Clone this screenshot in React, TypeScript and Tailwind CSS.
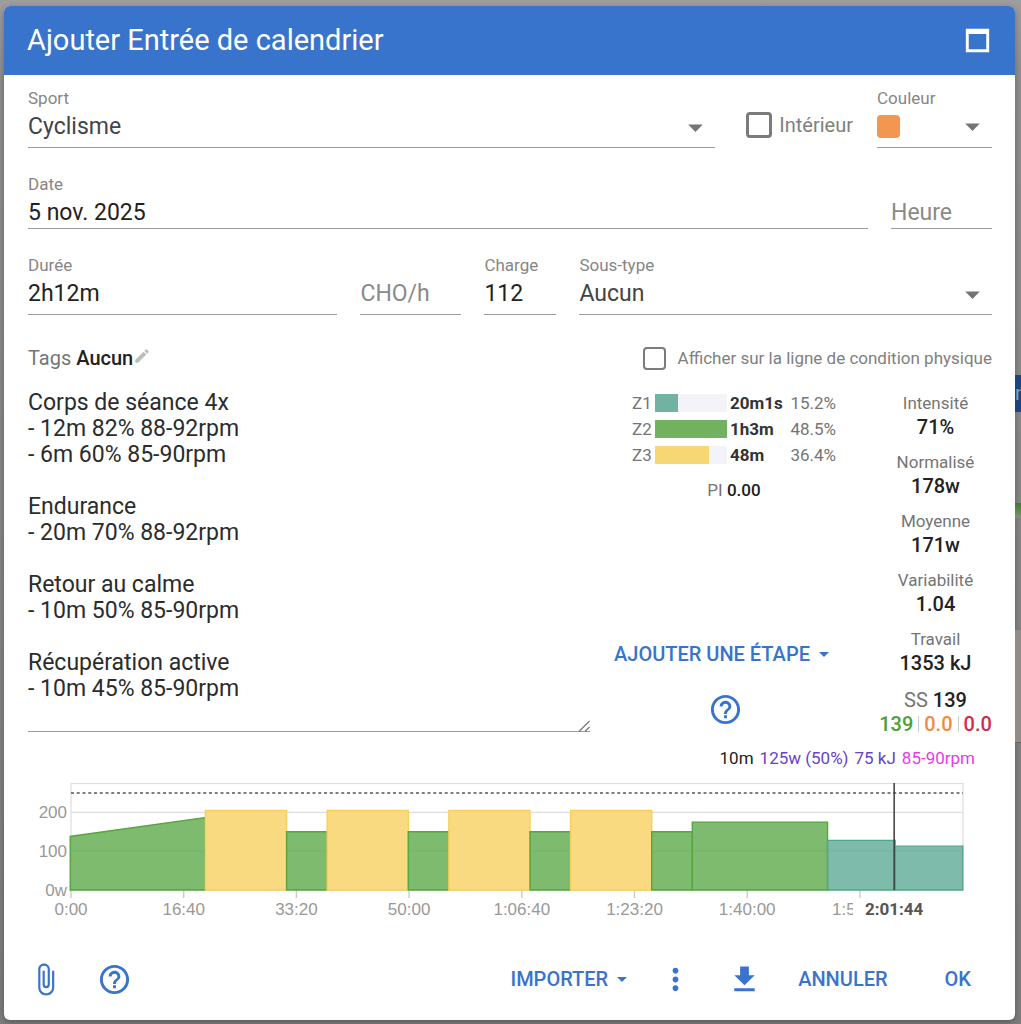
import { useState } from "react";
import type { ReactNode } from "react";
import {
  MdArrowDropDown,
  MdAttachFile,
  MdEdit,
  MdFileDownload,
  MdHelpOutline,
  MdMoreVert,
} from "react-icons/md";

const zones = [
  { name: "Z1", time: "20m1s", pct: "15.2%", fill: 32, color: "bg-[#72b2a1]" },
  { name: "Z2", time: "1h3m", pct: "48.5%", fill: 100, color: "bg-[#71b160]" },
  { name: "Z3", time: "48m", pct: "36.4%", fill: 75, color: "bg-[#f7d774]" },
];

const stats = [
  { label: "Intensité", value: "71%" },
  { label: "Normalisé", value: "178w" },
  { label: "Moyenne", value: "171w" },
  { label: "Variabilité", value: "1.04" },
  { label: "Travail", value: "1353 kJ" },
];

const workout = `Corps de séance 4x
- 12m 82% 88-92rpm
- 6m 60% 85-90rpm

Endurance
- 20m 70% 88-92rpm

Retour au calme
- 10m 50% 85-90rpm

Récupération active
- 10m 45% 85-90rpm`;

const zoneFill = {
  z1: { fill: "#5faa96", stroke: "#52a68c", opacity: 0.8 },
  z2: { fill: "#5faa4a", stroke: "#56a641", opacity: 0.8 },
  z3: { fill: "#fada80", stroke: "#f8cf5c", opacity: 1 },
};

type Step = { secs: number; from: number; to: number; zone: keyof typeof zoneFill };

const interval: Step[] = [
  { secs: 720, from: 205, to: 205, zone: "z3" },
  { secs: 360, from: 150, to: 150, zone: "z2" },
];

const steps: Step[] = [
  { secs: 1200, from: 138, to: 187, zone: "z2" },
  ...interval,
  ...interval,
  ...interval,
  ...interval,
  { secs: 1200, from: 175, to: 175, zone: "z2" },
  { secs: 600, from: 128, to: 128, zone: "z1" },
  { secs: 600, from: 113, to: 113, zone: "z1" },
];

const ticks = ["0:00", "16:40", "33:20", "50:00", "1:06:40", "1:23:20", "1:40:00"];

function Field({ label, id, className, children }: { label?: string; id: string; className: string; children: ReactNode }) {
  return (
    <div className={`flex min-w-0 flex-col justify-end gap-1 ${className}`}>
      {label && (
        <label htmlFor={id} className="text-[17px] leading-5 text-[#868686]">
          {label}
        </label>
      )}
      {children}
    </div>
  );
}

const inputClass =
  "w-full min-w-0 border-b border-[#9b9b9b] bg-transparent text-[23px] leading-7 text-[#222] outline-none placeholder:text-[#8a8a8a]";

function Select({ id, value }: { id: string; value: string }) {
  return (
    <div className="grid items-center border-b border-[#9b9b9b] pt-px pb-1.5">
      <select
        id={id}
        className="col-start-1 row-start-1 h-7 w-full appearance-none bg-transparent text-[23px] leading-7 text-[#444] outline-none"
      >
        <option>{value}</option>
      </select>
      <MdArrowDropDown className="pointer-events-none col-start-1 row-start-1 mr-0.5 size-[35px] -my-1 justify-self-end text-[#757575]" />
    </div>
  );
}

function PowerChart() {
  const x = (secs: number) => 43 + secs * 0.1127;
  const y = (watts: number) => 114 - watts * 0.388;

  let start = 0;
  const shapes = steps.map((s, i) => {
    const a = x(start) - 0.8;
    start += s.secs;
    const b = x(start) - 0.8;
    const c = zoneFill[s.zone];
    return (
      <path
        key={i}
        d={`M${a} ${y(0)}V${y(s.from)}L${b} ${y(s.to)}V${y(0)}Z`}
        fill={c.fill}
        fillOpacity={c.opacity}
        stroke={c.stroke}
        strokeWidth="1.4"
      />
    );
  });

  return (
    <svg viewBox="0 0 964 148" className="block w-full" role="img" aria-label="Puissance">
      <g stroke="#dedede" strokeWidth="1.2" fill="none">
        <rect x="43" y="7.5" width="892" height="106.5" />
        <path d={`M43 ${y(200)}H935M43 ${y(100)}H935`} />
      </g>
      <g stroke="#cccccc" strokeWidth="1.4">
        {[...ticks, "1:56:40"].map((t, i) => (
          <path key={t} d={`M${x(i * 1000)} 114v8`} />
        ))}
      </g>
      {shapes}
      <path d={`M43 ${y(250)}H935`} stroke="#555" strokeWidth="1.6" strokeDasharray="3 2.75" />
      <g fill="#999" fontSize="17" textAnchor="end" className="font-['Liberation_Sans',sans-serif]">
        <text x="39" y={y(200) + 6}>200</text>
        <text x="39" y={y(100) + 6}>100</text>
        <text x="39" y={y(0) + 6}>0w</text>
      </g>
      <g fill="#999" fontSize="17" textAnchor="middle" className="font-['Liberation_Sans',sans-serif]">
        {ticks.map((t, i) => (
          <text key={t} x={x(i * 1000)} y="139">{t}</text>
        ))}
        {/* this tick is cut short by the cursor time */}
        <text x="804" y="139" textAnchor="start">1:5</text>
      </g>
      <rect x="825" y="124" width="80" height="20" fill="#fff" />
      <path d={`M${x(7304)} 7V114`} stroke="#3c3c3c" strokeWidth="1.5" />
      <text x={x(7304)} y="139" fill="#555" fontSize="17" fontWeight="700" textAnchor="middle">
        2:01:44
      </text>
    </svg>
  );
}

export default function App() {
  const [indoor, setIndoor] = useState(false);
  const [showFitness, setShowFitness] = useState(false);

  return (
    <div className="flex min-h-screen bg-[#8f8f8f] bg-linear-to-b from-[#9e9e9e] via-[#8f8f8f] via-7% to-[#7c7c7c] pl-1 font-[Roboto,sans-serif]">
      <div className="mt-1.5 mb-[5px] flex min-w-0 flex-1 flex-col self-start overflow-hidden rounded-md bg-white shadow-[0_2px_6px_rgba(0,0,0,0.3)]">
        <header className="flex h-[69px] items-center justify-between bg-[#3974cc] pr-5 pl-[23px] text-white">
          <h1 className="pb-0.5 text-[29px] leading-9">Ajouter Entrée de calendrier</h1>
          <button type="button" aria-label="Agrandir">
            <svg viewBox="0 0 24 24" className="size-[35px]" fill="currentColor">
              <path d="M4 4H20V20H4V4M6 7.6V18H18V7.6H6Z" />
            </svg>
          </button>
        </header>

        <form className="flex flex-col pt-[13px] pr-[23px] pl-6" onSubmit={(e) => e.preventDefault()}>
          <div className="flex flex-col gap-[26px]">
            <div className="flex">
              <Field label="Sport" id="sport" className="flex-1">
                <Select id="sport" value="Cyclisme" />
              </Field>
              <label className="mt-3.5 mr-6 ml-[31px] flex items-center gap-[7px] self-center text-xl leading-6 text-[#808080]">
                <input
                  type="checkbox"
                  checked={indoor}
                  onChange={(e) => setIndoor(e.target.checked)}
                  className="size-[26px] appearance-none rounded-sm border-3 border-[#7b7b7b] checked:bg-[#3974cc]"
                />
                Intérieur
              </label>
              <Field label="Couleur" id="color" className="w-[115px]">
                <div className="grid items-center border-b border-[#9b9b9b] pb-[7px]">
                  <span className="col-start-1 row-start-1 size-[23px] rounded-sm bg-[#f29752]" />
                  <select id="color" className="col-start-1 row-start-1 h-7 w-full appearance-none bg-transparent outline-none">
                    <option value="orange" aria-label="Orange" />
                  </select>
                  <MdArrowDropDown className="pointer-events-none col-start-1 row-start-1 mr-0.5 size-[35px] -my-1 justify-self-end text-[#757575]" />
                </div>
              </Field>
            </div>

            <div className="flex gap-[23px]">
              <Field label="Date" id="date" className="flex-1">
                <input id="date" defaultValue="5 nov. 2025" className={`${inputClass} h-[31px] pb-0.5`} />
              </Field>
              <Field id="time" className="w-[101px]">
                <input id="time" aria-label="Heure" placeholder="Heure" className={`${inputClass} h-[31px] pb-0.5`} />
              </Field>
            </div>

            <div className="flex gap-[23px]">
              <Field label="Durée" id="duration" className="flex-3">
                <input id="duration" defaultValue="2h12m" className={`${inputClass} h-9 pb-[7px]`} />
              </Field>
              <Field id="cho" className="w-[101px]">
                <input id="cho" aria-label="CHO/h" placeholder="CHO/h" className={`${inputClass} h-9 pb-[7px]`} />
              </Field>
              <Field label="Charge" id="load" className="w-[72px]">
                <input id="load" defaultValue="112" className={`${inputClass} h-9 pb-[7px]`} />
              </Field>
              <Field label="Sous-type" id="subtype" className="flex-4">
                <Select id="subtype" value="Aucun" />
              </Field>
            </div>
          </div>

          <div className="mt-[31px] flex items-center justify-between">
            <div className="flex items-center text-[20px] leading-6 text-[#757575]">
              Tags&nbsp;<span className="font-medium text-[#222]">Aucun</span>
              <button type="button" aria-label="Modifier les tags" className="pb-1">
                <MdEdit className="size-[18px] text-[#bdbdbd]" />
              </button>
            </div>
            <label className="flex items-center gap-3 text-[17px] leading-6 text-[#808080]">
              <input
                type="checkbox"
                checked={showFitness}
                onChange={(e) => setShowFitness(e.target.checked)}
                className="size-[23px] appearance-none rounded-sm border-2 border-[#7b7b7b] checked:bg-[#3974cc]"
              />
              Afficher sur la ligne de condition physique
            </label>
          </div>

          <div className="mt-5 flex">
            <div className="relative min-w-0 flex-1 self-start">
              <textarea
                aria-label="Description"
                defaultValue={workout}
                className="block h-[342px] w-full resize-none overflow-hidden border-b border-[#9b9b9b] text-[23px] leading-[26px] text-[#2c2c2c] outline-none"
              />
              <svg viewBox="0 0 12 12" className="absolute right-0 bottom-0 size-3" stroke="#777" strokeWidth="1.2">
                <path d="M1 11.5L11.5 1M7 11.5L11.5 7" />
              </svg>
            </div>

            <div className="ml-6 flex w-[222px] flex-col items-center">
              <table className="w-[204px] self-end text-[17px] leading-[26px]">
                <tbody>
                  {zones.map((z) => (
                    <tr key={z.name}>
                      <td className="w-[23px] p-0 text-[#757575]">{z.name}</td>
                      <td className="w-[72px] p-0">
                        <div className="h-[18px] w-[72px] bg-[#f4f3fa]">
                          <div className={`h-full ${z.color}`} style={{ width: `${z.fill}%` }} />
                        </div>
                      </td>
                      <td className="p-0 pl-[3px] font-bold text-[#333]">{z.time}</td>
                      <td className="p-0 text-right text-[#757575]">{z.pct}</td>
                    </tr>
                  ))}
                </tbody>
              </table>
              <p className="mt-2.5 w-[204px] self-end text-center text-[17px] leading-6 text-[#757575]">
                PI <span className="font-medium text-[#222]">0.00</span>
              </p>
              <button type="button" className="mt-auto flex items-center gap-0.5 text-[20px] leading-6 font-medium text-[#3974cc]">
                AJOUTER UNE ÉTAPE
                <MdArrowDropDown className="size-6" />
              </button>
              <button type="button" aria-label="Aide" className="mt-[26px] mb-[9px] text-[#3974cc]">
                <MdHelpOutline className="size-[35px]" />
              </button>
            </div>

            <div className="ml-[43px] flex w-[113px] flex-col items-center gap-[11px] pt-px text-[#222]">
              {stats.map((s) => (
                <div key={s.label} className="text-center">
                  <div className="text-[17px] leading-6 text-[#757575]">{s.label}</div>
                  <div className="text-[20px] leading-6 font-medium">{s.value}</div>
                </div>
              ))}
              <div className="pt-0.5 text-center text-[20px] leading-6 font-medium whitespace-nowrap">
                <div>
                  <span className="font-normal text-[#757575]">SS</span> 139
                </div>
                <div className="flex items-center gap-[5px]">
                  <span className="text-[#4da135]">139</span>
                  <span className="h-4 w-px bg-[#ccc]" />
                  <span className="text-[#f28c3c]">0.0</span>
                  <span className="h-4 w-px bg-[#ccc]" />
                  <span className="text-[#d02c4c]">0.0</span>
                </div>
              </div>
            </div>
          </div>

          <p className="mt-2.5 mr-[17px] flex justify-end gap-1.5 text-[17px] leading-6 text-[#222]">
            <span>10m</span>
            <span className="text-[#6741c9]">125w (50%)</span>
            <span className="text-[#6741c9]">75 kJ</span>
            <span className="text-[#e83ae8]">85-90rpm</span>
          </p>
          <div className="mt-1.5">
            <PowerChart />
          </div>

          <footer className="mt-7 mb-3.5 flex h-[54px] items-center text-[20px] leading-6 font-medium text-[#3974cc]">
            <button type="button" aria-label="Joindre un fichier">
              <MdAttachFile className="size-[35px]" />
            </button>
            <button type="button" aria-label="Aide" className="ml-[34px]">
              <MdHelpOutline className="size-[35px]" />
            </button>
            <button type="button" className="ml-auto flex items-center gap-0.5">
              IMPORTER
              <MdArrowDropDown className="size-6" />
            </button>
            <button type="button" aria-label="Plus d'options" className="ml-6">
              <MdMoreVert className="size-[35px]" />
            </button>
            <button type="button" aria-label="Télécharger" className="ml-[34px]">
              <MdFileDownload className="size-[35px]" />
            </button>
            <button type="button" className="ml-9">ANNULER</button>
            <button type="submit" className="mr-[21px] ml-[57px]">OK</button>
          </footer>
        </form>
      </div>

      {/* slice of the calendar left visible beside the dialog */}
      <div className="flex w-1.5 flex-col overflow-hidden" aria-hidden="true">
        <div className="mt-[375px] h-[37px] bg-[#1d4380] text-[20px] leading-9 text-[#8f9cb0]">n</div>
        <div className="mt-[91px] h-[15px] bg-linear-to-b from-[#3f7a2c] to-[#7d9275]" />
        <div className="mt-[112px] h-[113px] border-b border-[#666] bg-[#918c88]" />
      </div>
    </div>
  );
}
